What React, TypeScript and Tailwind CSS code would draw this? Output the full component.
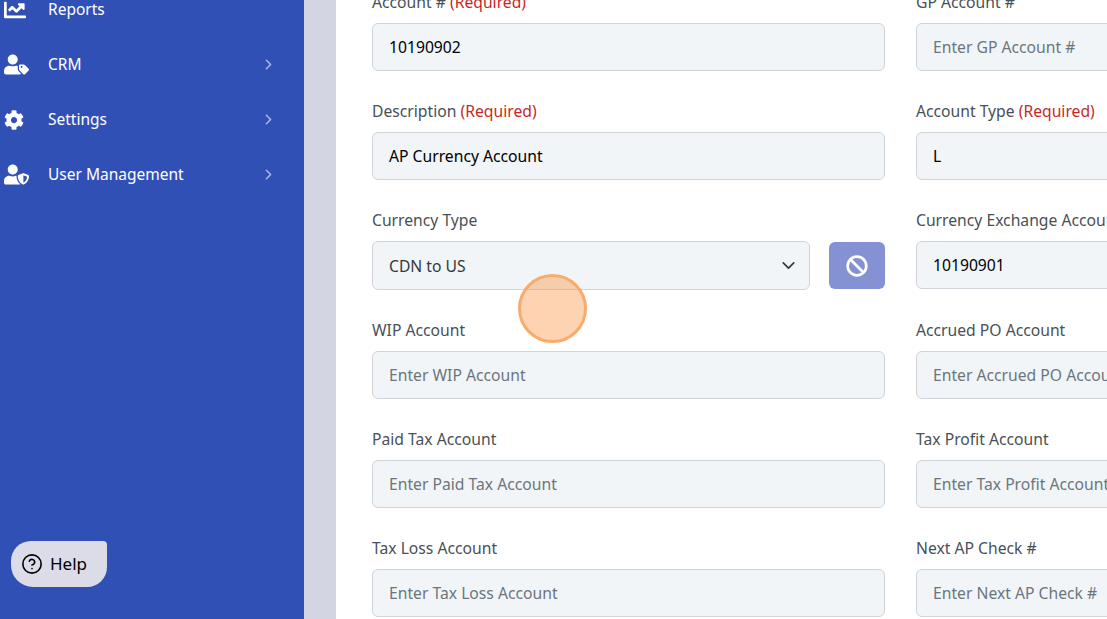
import { ChevronDown, ChevronRight, CircleHelp } from "lucide-react";
import { FaBan, FaChartLine, FaCog, FaUserShield, FaUserTag } from "react-icons/fa";
import type { ReactNode } from "react";

const navItems = [
    { label: "Reports", icon: <FaChartLine size={22} />, arrow: false },
    { label: "CRM", icon: <FaUserTag size={25} />, arrow: true },
    { label: "Settings", icon: <FaCog size={20} />, arrow: true },
    { label: "User Management", icon: <FaUserShield size={25} />, arrow: true },
];

function Label({ text, required }: { text: string; required?: boolean }) {
    return (
        <div className="h-[22px] mb-[10px] leading-[22px] text-[15.7px] text-[#495057] whitespace-nowrap">
            {text} {required && <span className="text-[#c62828]">(Required)</span>}
        </div>
    );
}

function Input({ value, placeholder }: { value?: string; placeholder?: string }) {
    return (
        <div className="h-12 flex items-center px-[16px] pt-[2px] rounded-md border border-[#ced4da] bg-[#f1f5f8] text-[15.7px] whitespace-nowrap overflow-hidden">
            {value ? <span className="text-black">{value}</span> : <span className="text-[#6c757d]">{placeholder}</span>}
        </div>
    );
}

function Field({ label, required, children }: { label: string; required?: boolean; children: ReactNode }) {
    return (
        <div className="pb-[29px]">
            <Label text={label} required={required} />
            {children}
        </div>
    );
}

export default function App() {
    return (
        <div className="relative flex h-[619px] w-[1107px] overflow-hidden bg-white font-['Noto_Sans',sans-serif]">
            <aside className="w-[304px] shrink-0 bg-[#3050b5] text-white">
                <div className="-mt-[18px]">
                    {navItems.map((item) => (
                        <div key={item.label} className="flex items-center h-[55px] pr-[27px] text-[15.5px]">
                            <div className="w-[48px] pl-[4px] flex items-center justify-start">{item.icon}</div>
                            <span className="flex-1">{item.label}</span>
                            {item.arrow && <ChevronRight size={17} strokeWidth={2.25} className="text-[#a9b6e4]" />}
                        </div>
                    ))}
                </div>
            </aside>
            <div className="w-[32px] shrink-0 bg-[#d3d5e3]" />
            <main className="flex-1 min-w-0 pl-[36px]">
                <div className="-mt-[9px] grid grid-cols-[513px_513px] gap-x-[31px]">
                    <div>
                        <Field label="Account #" required><Input value="10190902" /></Field>
                        <Field label="Description" required><Input value="AP Currency Account" /></Field>
                        <Field label="Currency Type">
                            <div className="flex items-start gap-[19px]">
                                <div className="h-[49px] w-[438px] flex items-center justify-between pl-[16px] pr-[10px] pt-[2px] rounded-md border border-[#ced4da] bg-[#f1f5f8] text-[15.7px] text-[#343a40]">
                                    CDN to US
                                    <ChevronDown size={21} className="-mt-[2px] text-[#343a40]" />
                                </div>
                                <button className="mt-px h-[47px] w-[56px] flex items-center justify-center rounded-md bg-[#8492d4] text-white">
                                    <FaBan size={22} />
                                </button>
                            </div>
                        </Field>
                        <Field label="WIP Account"><Input placeholder="Enter WIP Account" /></Field>
                        <Field label="Paid Tax Account"><Input placeholder="Enter Paid Tax Account" /></Field>
                        <Field label="Tax Loss Account"><Input placeholder="Enter Tax Loss Account" /></Field>
                    </div>
                    <div>
                        <Field label="GP Account #"><Input placeholder="Enter GP Account #" /></Field>
                        <Field label="Account Type" required><Input value="L" /></Field>
                        <Field label="Currency Exchange Account"><Input value="10190901" /></Field>
                        <div className="pt-px">
                            <Field label="Accrued PO Account"><Input placeholder="Enter Accrued PO Account" /></Field>
                        </div>
                        <Field label="Tax Profit Account"><Input placeholder="Enter Tax Profit Account" /></Field>
                        <Field label="Next AP Check #"><Input placeholder="Enter Next AP Check #" /></Field>
                    </div>
                </div>
            </main>
            <div className="absolute left-[11px] top-[541px] h-[46px] w-[96px] flex items-center gap-[7px] pl-[10px] rounded-tl-[20px] rounded-tr-[4px] rounded-br-[20px] rounded-bl-[22px] bg-[#dcdce8] text-black text-[17px]">
                <CircleHelp size={22} strokeWidth={1.75} />
                Help
            </div>
            <div className="absolute left-[518px] top-[274px] h-[69px] w-[69px] rounded-full border-[3px] border-[#f9ab6c] bg-[#fb923c]/40" />
        </div>
    );
}
